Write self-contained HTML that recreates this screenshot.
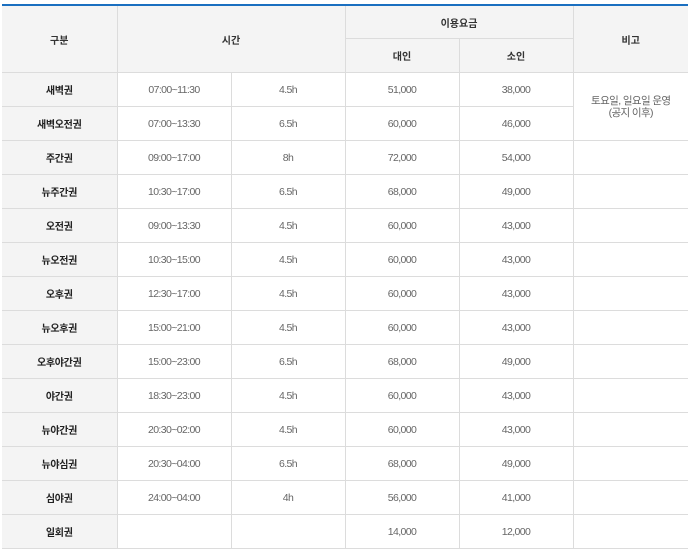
<!DOCTYPE html>
<html><head><meta charset="utf-8"><style>
html,body{margin:0;padding:0;background:#fff;width:691px;height:551px;overflow:hidden}
table{position:absolute;left:2px;top:4px;border-collapse:collapse;table-layout:fixed;width:686px;border-top:2px solid #1a6fc0;font-family:"Liberation Sans","Noto Sans CJK KR","NanumGothic",sans-serif;font-size:10.5px}
td,th{border:1px solid #dcdcdc;text-align:center;height:33px;padding:0;color:#666;letter-spacing:-0.6px;font-weight:normal}
th{background:#f4f4f4;color:#333}
tr.h th{height:32px}
tr.h2 th{height:33px}
tbody th{color:#222;font-weight:bold;font-size:10px;letter-spacing:-0.3px}
thead th{font-weight:bold;font-size:10px;letter-spacing:0}
table tr > *:first-child{border-left:none}
table tr > *:last-child{border-right:none}
</style></head><body>
<table>
<colgroup><col style="width:115px"><col style="width:114px"><col style="width:114px"><col style="width:114px"><col style="width:114px"><col style="width:115px"></colgroup>
<thead>
<tr class="h"><th rowspan="2">구분</th><th colspan="2" rowspan="2">시간</th><th colspan="2">이용요금</th><th rowspan="2">비고</th></tr>
<tr class="h2"><th>대인</th><th>소인</th></tr>
</thead>
<tbody>
<tr><th>새벽권</th><td>07:00~11:30</td><td>4.5h</td><td>51,000</td><td>38,000</td><td rowspan="2" style="line-height:12px">토요일, 일요일 운영<br>(공지 이후)</td></tr>
<tr><th>새벽오전권</th><td>07:00~13:30</td><td>6.5h</td><td>60,000</td><td>46,000</td></tr>
<tr><th>주간권</th><td>09:00~17:00</td><td>8h</td><td>72,000</td><td>54,000</td><td></td></tr>
<tr><th>뉴주간권</th><td>10:30~17:00</td><td>6.5h</td><td>68,000</td><td>49,000</td><td></td></tr>
<tr><th>오전권</th><td>09:00~13:30</td><td>4.5h</td><td>60,000</td><td>43,000</td><td></td></tr>
<tr><th>뉴오전권</th><td>10:30~15:00</td><td>4.5h</td><td>60,000</td><td>43,000</td><td></td></tr>
<tr><th>오후권</th><td>12:30~17:00</td><td>4.5h</td><td>60,000</td><td>43,000</td><td></td></tr>
<tr><th>뉴오후권</th><td>15:00~21:00</td><td>4.5h</td><td>60,000</td><td>43,000</td><td></td></tr>
<tr><th>오후야간권</th><td>15:00~23:00</td><td>6.5h</td><td>68,000</td><td>49,000</td><td></td></tr>
<tr><th>야간권</th><td>18:30~23:00</td><td>4.5h</td><td>60,000</td><td>43,000</td><td></td></tr>
<tr><th>뉴야간권</th><td>20:30~02:00</td><td>4.5h</td><td>60,000</td><td>43,000</td><td></td></tr>
<tr><th>뉴야심권</th><td>20:30~04:00</td><td>6.5h</td><td>68,000</td><td>49,000</td><td></td></tr>
<tr><th>심야권</th><td>24:00~04:00</td><td>4h</td><td>56,000</td><td>41,000</td><td></td></tr>
<tr><th>일회권</th><td></td><td></td><td>14,000</td><td>12,000</td><td></td></tr>
</tbody>
</table>
</body></html>
